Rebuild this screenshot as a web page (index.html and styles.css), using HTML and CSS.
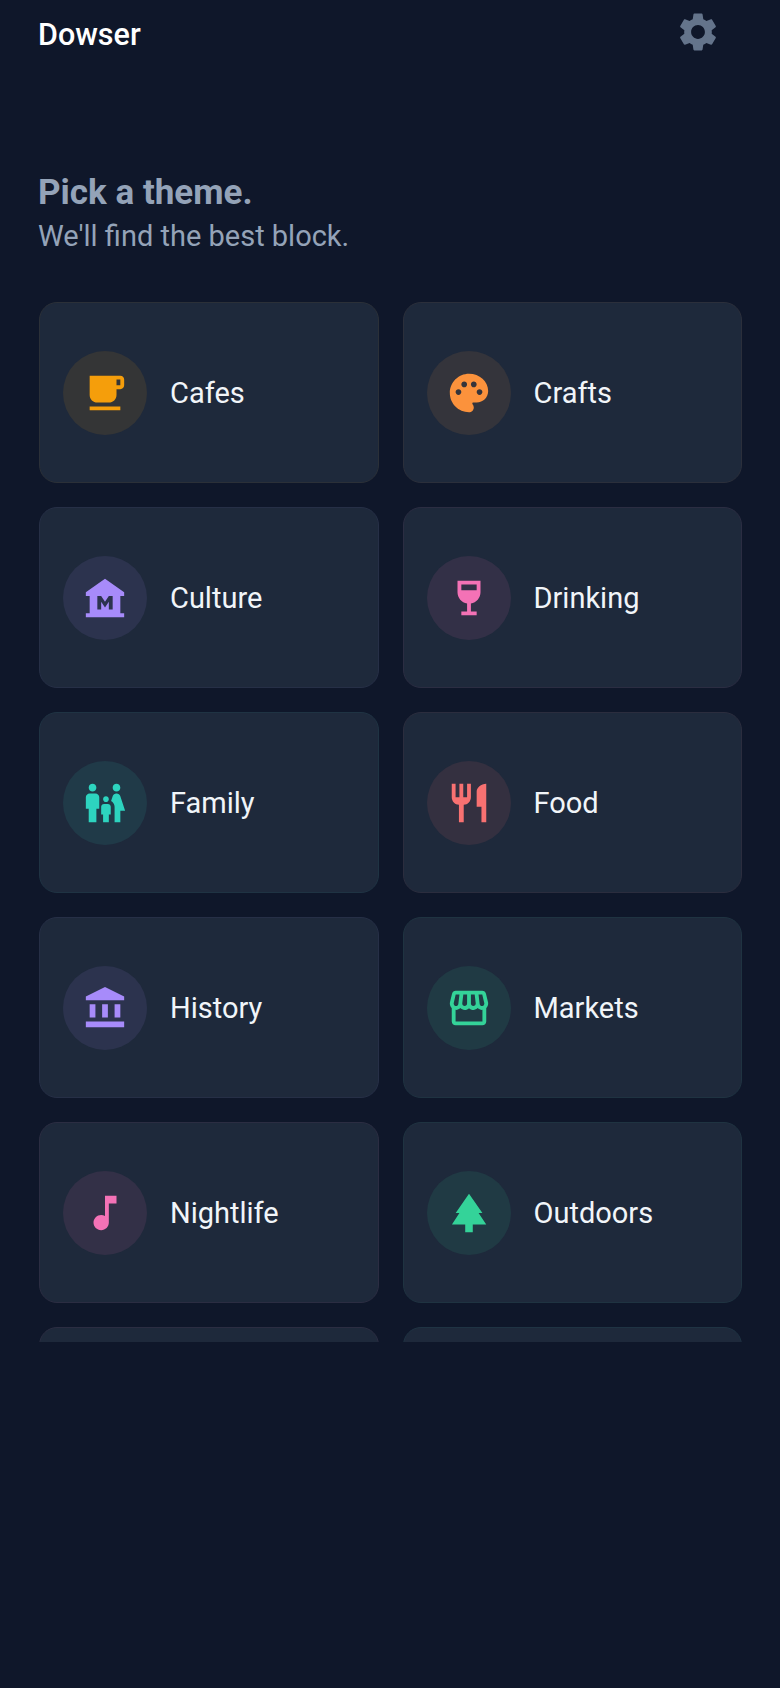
FILE: index.html
```html
<!DOCTYPE html>
<html lang="en">
<head>
  <meta charset="UTF-8">
  <meta name="viewport" content="width=device-width, initial-scale=1.0">
  <title>Dowser</title>
  <link rel="stylesheet" href="styles.css">
</head>
<body>
  <div class="container">
    <header class="top-bar">
      <h1 class="app-name">Dowser</h1>
      <button class="settings-button" type="button" aria-label="Settings">
        <svg viewBox="0 0 24 24"><path d="M19.14 12.94c.04-.3.06-.61.06-.94 0-.32-.02-.64-.07-.94l2.03-1.58c.18-.14.23-.41.12-.61l-1.92-3.32c-.12-.22-.37-.29-.59-.22l-2.39.96c-.5-.38-1.03-.7-1.62-.94l-.36-2.54c-.04-.24-.24-.41-.48-.41h-3.84c-.24 0-.43.17-.47.41l-.36 2.54c-.59.24-1.13.57-1.62.94l-2.39-.96c-.22-.08-.47 0-.59.22L2.74 8.87c-.12.21-.08.47.12.61l2.03 1.58c-.05.3-.09.63-.09.94s.02.64.07.94l-2.03 1.58c-.18.14-.23.41-.12.61l1.92 3.32c.12.22.37.29.59.22l2.39-.96c.5.38 1.03.7 1.62.94l.36 2.54c.05.24.24.41.48.41h3.84c.24 0 .44-.17.47-.41l.36-2.54c.59-.24 1.13-.56 1.62-.94l2.39.96c.22.08.47 0 .59-.22l1.92-3.32c.12-.22.07-.47-.12-.61l-2.01-1.58zM12 15.6c-1.98 0-3.6-1.62-3.6-3.6s1.62-3.6 3.6-3.6 3.6 1.62 3.6 3.6-1.62 3.6-3.6 3.6z"/></svg>
      </button>
    </header>

    <div class="intro">
      <h2>Pick a theme.</h2>
      <p>We'll find the best block.</p>
    </div>

    <div class="theme-list">
      <div class="theme-grid">
        <!-- first row -->
        <a class="theme-card amber">
          <span class="theme-icon"><svg viewBox="0 0 24 24"><path d="M20 3H4v10c0 2.21 1.79 4 4 4h6c2.21 0 4-1.79 4-4v-3h2c1.11 0 2-.9 2-2V5c0-1.11-.89-2-2-2zm0 5h-2V5h2v3zM4 19h16v2H4z"/></svg></span>
          <span class="theme-label">Cafes</span>
        </a>
        <a class="theme-card orange">
          <span class="theme-icon"><svg viewBox="0 0 24 24"><path d="M12 2C6.49 2 2 6.49 2 12s4.49 10 10 10c1.38 0 2.5-1.12 2.5-2.5 0-.61-.23-1.2-.64-1.67-.08-.1-.13-.21-.13-.33 0-.28.22-.5.5-.5H16c3.31 0 6-2.69 6-6 0-4.96-4.49-9-10-9zm-5.5 11c-.83 0-1.5-.67-1.5-1.5S5.67 10 6.5 10s1.5.67 1.5 1.5S7.33 13 6.5 13zm3-4C8.67 9 8 8.33 8 7.5S8.67 6 9.5 6s1.5.67 1.5 1.5S10.33 9 9.5 9zm5 0c-.83 0-1.5-.67-1.5-1.5S13.67 6 14.5 6s1.5.67 1.5 1.5S15.33 9 14.5 9zm3 4c-.83 0-1.5-.67-1.5-1.5s.67-1.5 1.5-1.5 1.5.67 1.5 1.5-.67 1.5-1.5 1.5z"/></svg></span>
          <span class="theme-label">Crafts</span>
        </a>
        <a class="theme-card purple">
          <span class="theme-icon"><svg viewBox="0 0 24 24"><path d="M22 11V9L12 2 2 9v2h2v9H2v2h20v-2h-2v-9h2zm-6 7h-2v-4l-2 3-2-3v4H8v-7h2l2 3 2-3h2v7z"/></svg></span>
          <span class="theme-label">Culture</span>
        </a>
        <a class="theme-card pink">
          <span class="theme-icon"><svg viewBox="0 0 24 24"><path d="M6 3l0 6c0 2.97 2.16 5.43 5 5.91V19H8v2h8v-2h-3v-4.09c2.84-.48 5-2.94 5-5.91l0-6H6zM16 8H8l0-3h8V8z"/></svg></span>
          <span class="theme-label">Drinking</span>
        </a>
        <a class="theme-card teal">
          <span class="theme-icon"><svg viewBox="0 0 24 24"><path d="M16 4c0-1.11.89-2 2-2s2 .89 2 2-.89 2-2 2-2-.89-2-2zm4 18v-6h2.5l-2.54-7.63C19.68 7.55 18.92 7 18.06 7h-.12c-.86 0-1.63.55-1.9 1.37l-.86 2.58c1.08.6 1.82 1.73 1.82 3.05v8h3zm-7.5-10.5c.83 0 1.5-.67 1.5-1.5s-.67-1.5-1.5-1.5S11 9.17 11 10s.67 1.5 1.5 1.5zM5.5 6c1.11 0 2-.89 2-2s-.89-2-2-2-2 .89-2 2 .89 2 2 2zm2 16v-7H9V9c0-1.1-.9-2-2-2H4c-1.1 0-2 .9-2 2v6h1.5v7h4zm6.5 0v-4h1v-4c0-.82-.68-1.5-1.5-1.5h-2c-.82 0-1.5.68-1.5 1.5v4h1v4h3z"/></svg></span>
          <span class="theme-label">Family</span>
        </a>
        <a class="theme-card red">
          <span class="theme-icon"><svg viewBox="0 0 24 24"><path d="M11 9H9V2H7v7H5V2H3v7c0 2.12 1.66 3.84 3.75 3.97V22h2.5v-9.03C11.34 12.84 13 11.12 13 9V2h-2v7zm5-3v8h2.5v8H21V2c-2.76 0-5 2.24-5 4z"/></svg></span>
          <span class="theme-label">Food</span>
        </a>
        <a class="theme-card purple">
          <span class="theme-icon"><svg viewBox="0 0 24 24"><path d="M4 10h3v7H4zM10.5 10h3v7h-3zM2 19h20v3H2zM17 10h3v7h-3zM12 1L2 6v2h20V6z"/></svg></span>
          <span class="theme-label">History</span>
        </a>
        <a class="theme-card green">
          <span class="theme-icon"><svg viewBox="0 0 24 24"><path d="M21.9 8.89l-1.05-4.37c-.22-.9-1-1.52-1.91-1.52H5.05C4.15 3 3.36 3.63 3.15 4.52L2.1 8.89c-.24 1.02-.02 2.06.62 2.88.08.11.19.19.28.29V19c0 1.1.9 2 2 2h14c1.1 0 2-.9 2-2v-6.94c.09-.09.2-.18.28-.28.64-.82.87-1.87.62-2.89zM18.91 4.99l1.05 4.37c.1.42.01.84-.25 1.17-.14.18-.44.47-.94.47-.61 0-1.14-.49-1.21-1.14L16.98 5l1.93-.01zM13 5h1.96l.54 4.52c.05.39-.07.78-.33 1.07-.22.26-.54.41-.95.41-.67 0-1.22-.59-1.22-1.31V5zM8.49 9.52L9.04 5H11v4.69C11 10.41 10.45 11 9.71 11c-.34 0-.65-.15-.89-.41-.25-.29-.37-.68-.33-1.07zM4.04 9.36L5.05 5h1.97l-.58 4.86c-.08.65-.6 1.14-1.21 1.14-.49 0-.8-.29-.93-.47-.27-.32-.36-.75-.26-1.17zM5 19v-6.03c.08.01.15.03.23.03.87 0 1.66-.36 2.24-.95.6.6 1.4.95 2.31.95.87 0 1.65-.36 2.23-.93.59.57 1.39.93 2.29.93.84 0 1.64-.35 2.24-.95.58.59 1.37.95 2.24.95.08 0 .15-.02.23-.03V19H5z"/></svg></span>
          <span class="theme-label">Markets</span>
        </a>
        <a class="theme-card pink">
          <span class="theme-icon"><svg viewBox="0 0 24 24"><path d="M12 3v10.55c-.59-.34-1.27-.55-2-.55-2.21 0-4 1.79-4 4s1.79 4 4 4 4-1.79 4-4V7h4V3h-6z"/></svg></span>
          <span class="theme-label">Nightlife</span>
        </a>
        <a class="theme-card green">
          <span class="theme-icon"><svg viewBox="0 0 24 24"><path d="M17 12h2L12 2 5.05 12H7l-3.9 6h6.92v4h3.95v-4H21z"/></svg></span>
          <span class="theme-label">Outdoors</span>
        </a>
        <!-- next row is cut off by the scroll area -->
        <a class="theme-card pink"></a>
        <a class="theme-card teal"></a>
      </div>
    </div>
  </div>
</body>
</html>
```

FILE: styles.css
```css
* {
  box-sizing: border-box;
}

body {
  font-family: Roboto, "Noto Sans", sans-serif;
  background-color: #0f172a;
  color: #f1f5f9;
  margin: 0;
  padding: 0;
  height: 1688px;
  overflow: hidden;
}

.container {
  display: flex;
  flex-direction: column;
  height: 1342px;
}

.top-bar {
  display: flex;
  justify-content: space-between;
  align-items: center;
  height: 64px;
  padding: 0 59px 0 38px;
}

.app-name {
  margin: 4px 0 0;
  font-size: 30.5px;
  font-weight: 500;
  color: #ffffff;
}

.settings-button {
  width: 46px;
  height: 46px;
  padding: 0;
  border: none;
  background: none;
  color: #64748b;
}

.settings-button svg {
  display: block;
  width: 46px;
  height: 46px;
  fill: currentColor;
}

.intro {
  padding: 107px 38px 0;
}

.intro h2 {
  margin: 0;
  font-size: 35px;
  line-height: 43px;
  font-weight: 700;
  color: #94a3b8;
}

.intro p {
  margin: 0;
  font-size: 29px;
  line-height: 44px;
  color: #94a3b8;
}

.theme-list {
  flex: 1;
  min-height: 0;
  margin-top: 44px;
  overflow: hidden;
}

.theme-grid {
  display: grid;
  grid-template-columns: 1fr 1fr;
  grid-auto-rows: 181px;
  gap: 24px;
  padding: 0 38px 0 39px;
}

.theme-card {
  display: flex;
  align-items: center;
  gap: 23px;
  padding: 0 23px;
  background-color: #1e293b;
  border: 1px solid color-mix(in srgb, var(--tone) 6%, #1e293b);
  border-radius: 18px;
}

.theme-icon {
  display: flex;
  justify-content: center;
  align-items: center;
  width: 84px;
  height: 84px;
  flex-shrink: 0;
  border-radius: 50%;
  background-color: color-mix(in srgb, var(--tone) 10%, #1e293b);
}

.theme-icon svg {
  width: 46px;
  height: 46px;
  fill: var(--tone);
}

.theme-label {
  font-size: 29px;
  color: #f1f5f9;
}

.amber { --tone: #f59e0b; }
.orange { --tone: #fb923c; }
.purple { --tone: #a78bfa; }
.pink { --tone: #f472b6; }
.teal { --tone: #2dd4bf; }
.red { --tone: #f87171; }
.green { --tone: #34d399; }
```
